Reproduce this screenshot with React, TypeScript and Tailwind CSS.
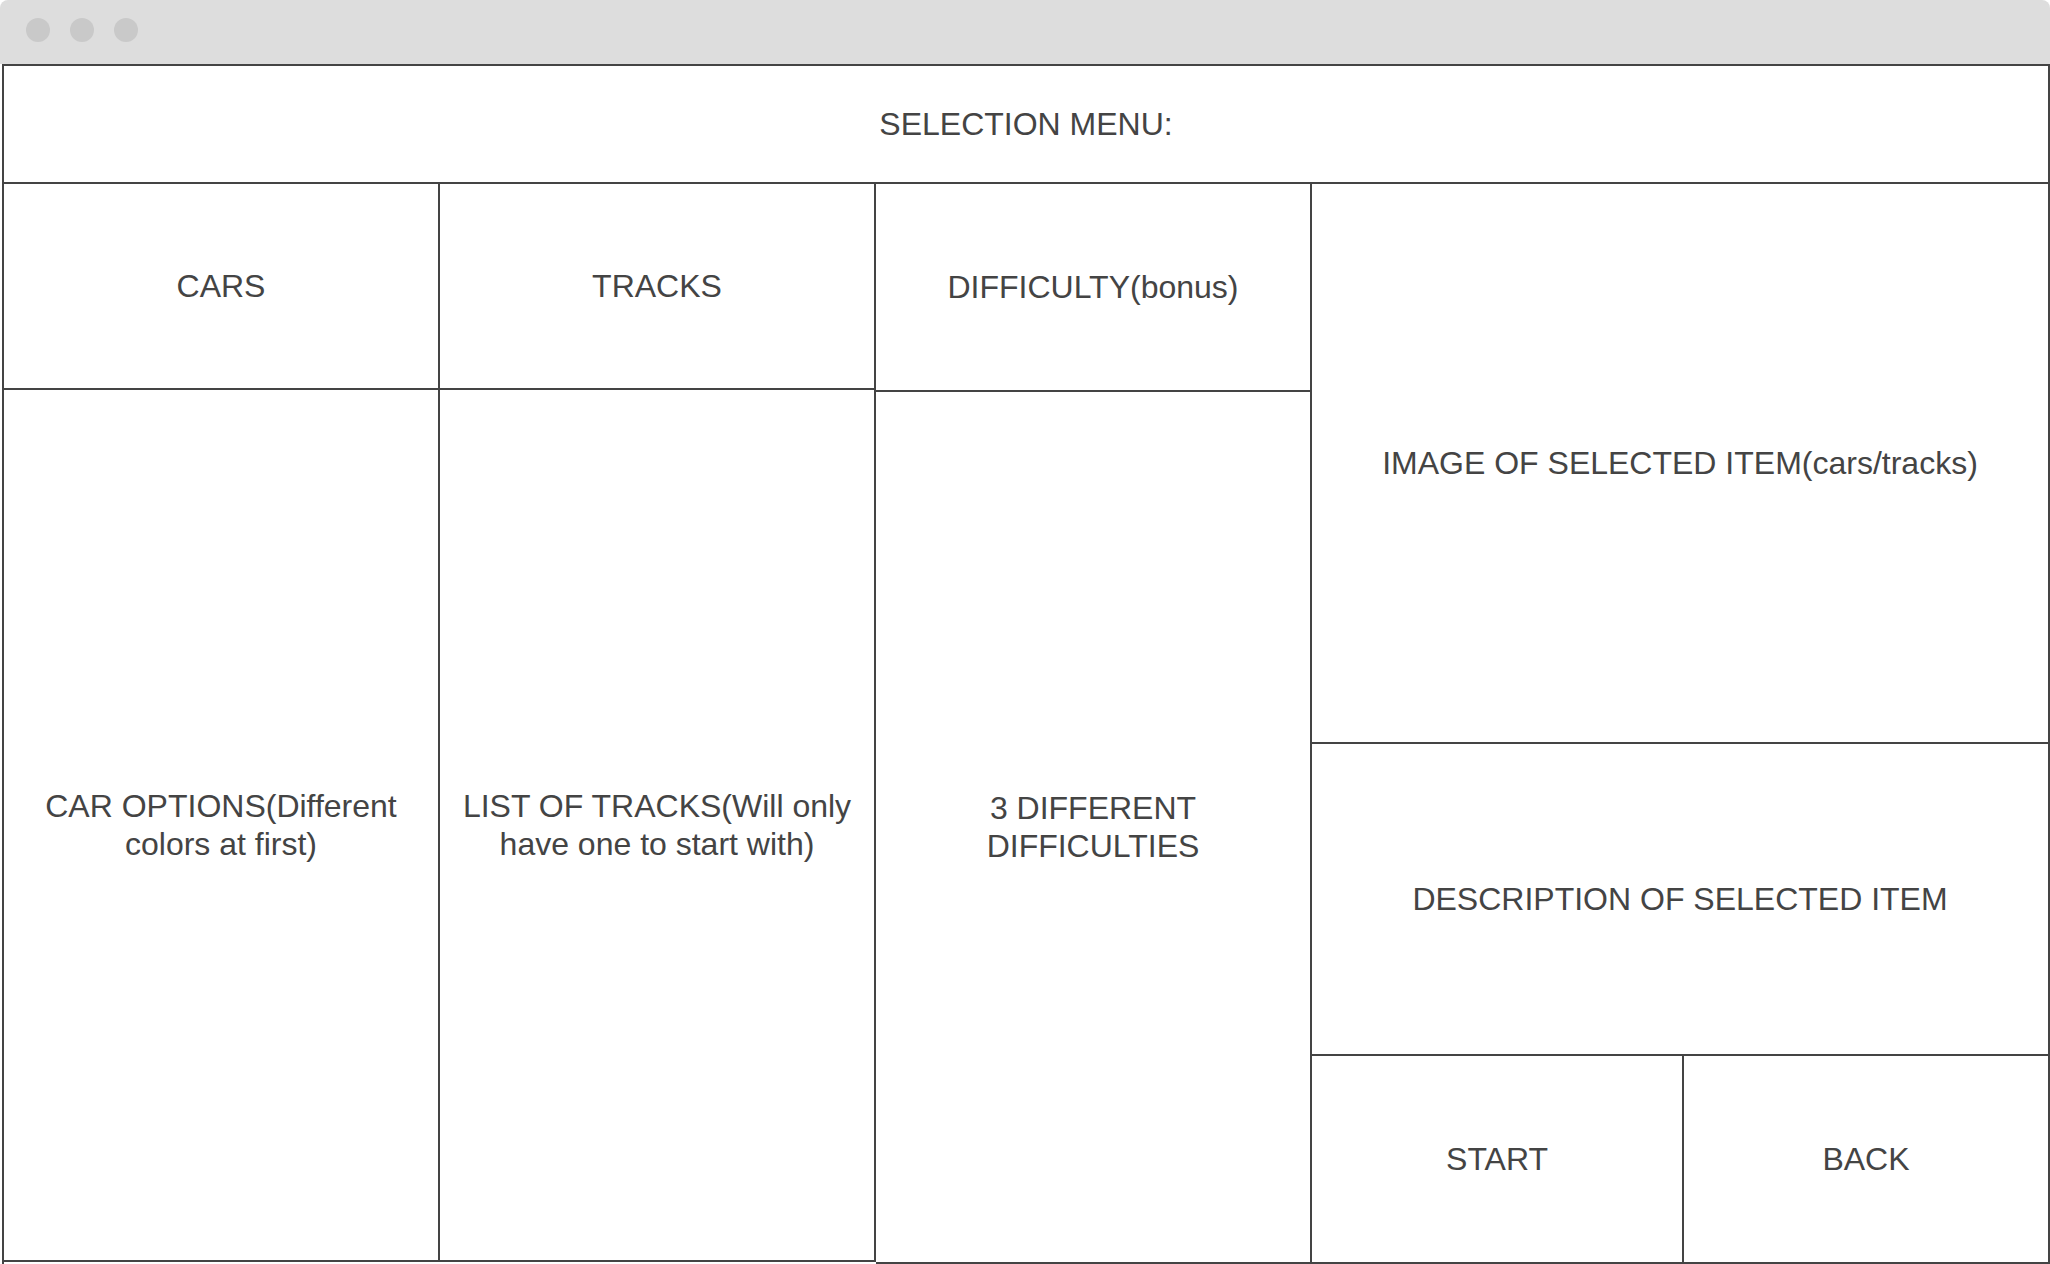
import React from "react"

const font = { fontFamily: '"Liberation Sans", Arial, sans-serif' }

function Cell({ children, className = "" }: { children?: React.ReactNode; className?: string }) {
  return (
    <div className={`flex items-center justify-center text-center text-[32px] leading-[38px] text-[#444444] ${className}`}>
      {children}
    </div>
  )
}

export default function App() {
  return (
    <div className="w-[2050px] h-[1264px] bg-white overflow-hidden" style={font}>
      {/* window chrome */}
      <div className="h-[64px] bg-[#dddddd] rounded-t-[8px] flex items-center gap-[20px] pl-[26px] pb-[4px]">
        <div className="w-[24px] h-[24px] rounded-full bg-[#c9c9c9]" />
        <div className="w-[24px] h-[24px] rounded-full bg-[#c9c9c9]" />
        <div className="w-[24px] h-[24px] rounded-full bg-[#c9c9c9]" />
      </div>

      {/* wireframe */}
      <div className="ml-[2px] w-[2048px] h-[1200px] border-x-2 border-t-2 border-[#444444] flex flex-col">
        <Cell className="h-[118px] shrink-0 border-b-2 border-[#444444]">SELECTION MENU:</Cell>

        <div className="flex flex-1">
          <div className="w-[436px] h-[1078px] flex flex-col border-r-2 border-b-2 border-[#444444]">
            <Cell className="h-[206px] shrink-0 border-b-2 border-[#444444]">CARS</Cell>
            <Cell className="flex-1 px-4">
              CAR OPTIONS(Different
              <br />
              colors at first)
            </Cell>
          </div>

          <div className="w-[436px] h-[1078px] flex flex-col border-r-2 border-b-2 border-[#444444]">
            <Cell className="h-[206px] shrink-0 border-b-2 border-[#444444]">TRACKS</Cell>
            <Cell className="flex-1 px-4">
              LIST OF TRACKS(Will only
              <br />
              have one to start with)
            </Cell>
          </div>

          <div className="w-[436px] h-[1080px] flex flex-col border-r-2 border-b-2 border-[#444444]">
            <Cell className="h-[208px] shrink-0 border-b-2 border-[#444444]">DIFFICULTY(bonus)</Cell>
            <Cell className="flex-1 px-4">
              3 DIFFERENT
              <br />
              DIFFICULTIES
            </Cell>
          </div>

          <div className="flex-1 h-[1080px] flex flex-col border-b-2 border-[#444444]">
            <Cell className="h-[560px] shrink-0 border-b-2 border-[#444444]">IMAGE OF SELECTED ITEM(cars/tracks)</Cell>
            <Cell className="h-[312px] shrink-0 border-b-2 border-[#444444]">DESCRIPTION OF SELECTED ITEM</Cell>
            <div className="flex flex-1">
              <Cell className="w-[372px] border-r-2 border-[#444444]">START</Cell>
              <Cell className="flex-1">BACK</Cell>
            </div>
          </div>
        </div>
      </div>
    </div>
  )
}
